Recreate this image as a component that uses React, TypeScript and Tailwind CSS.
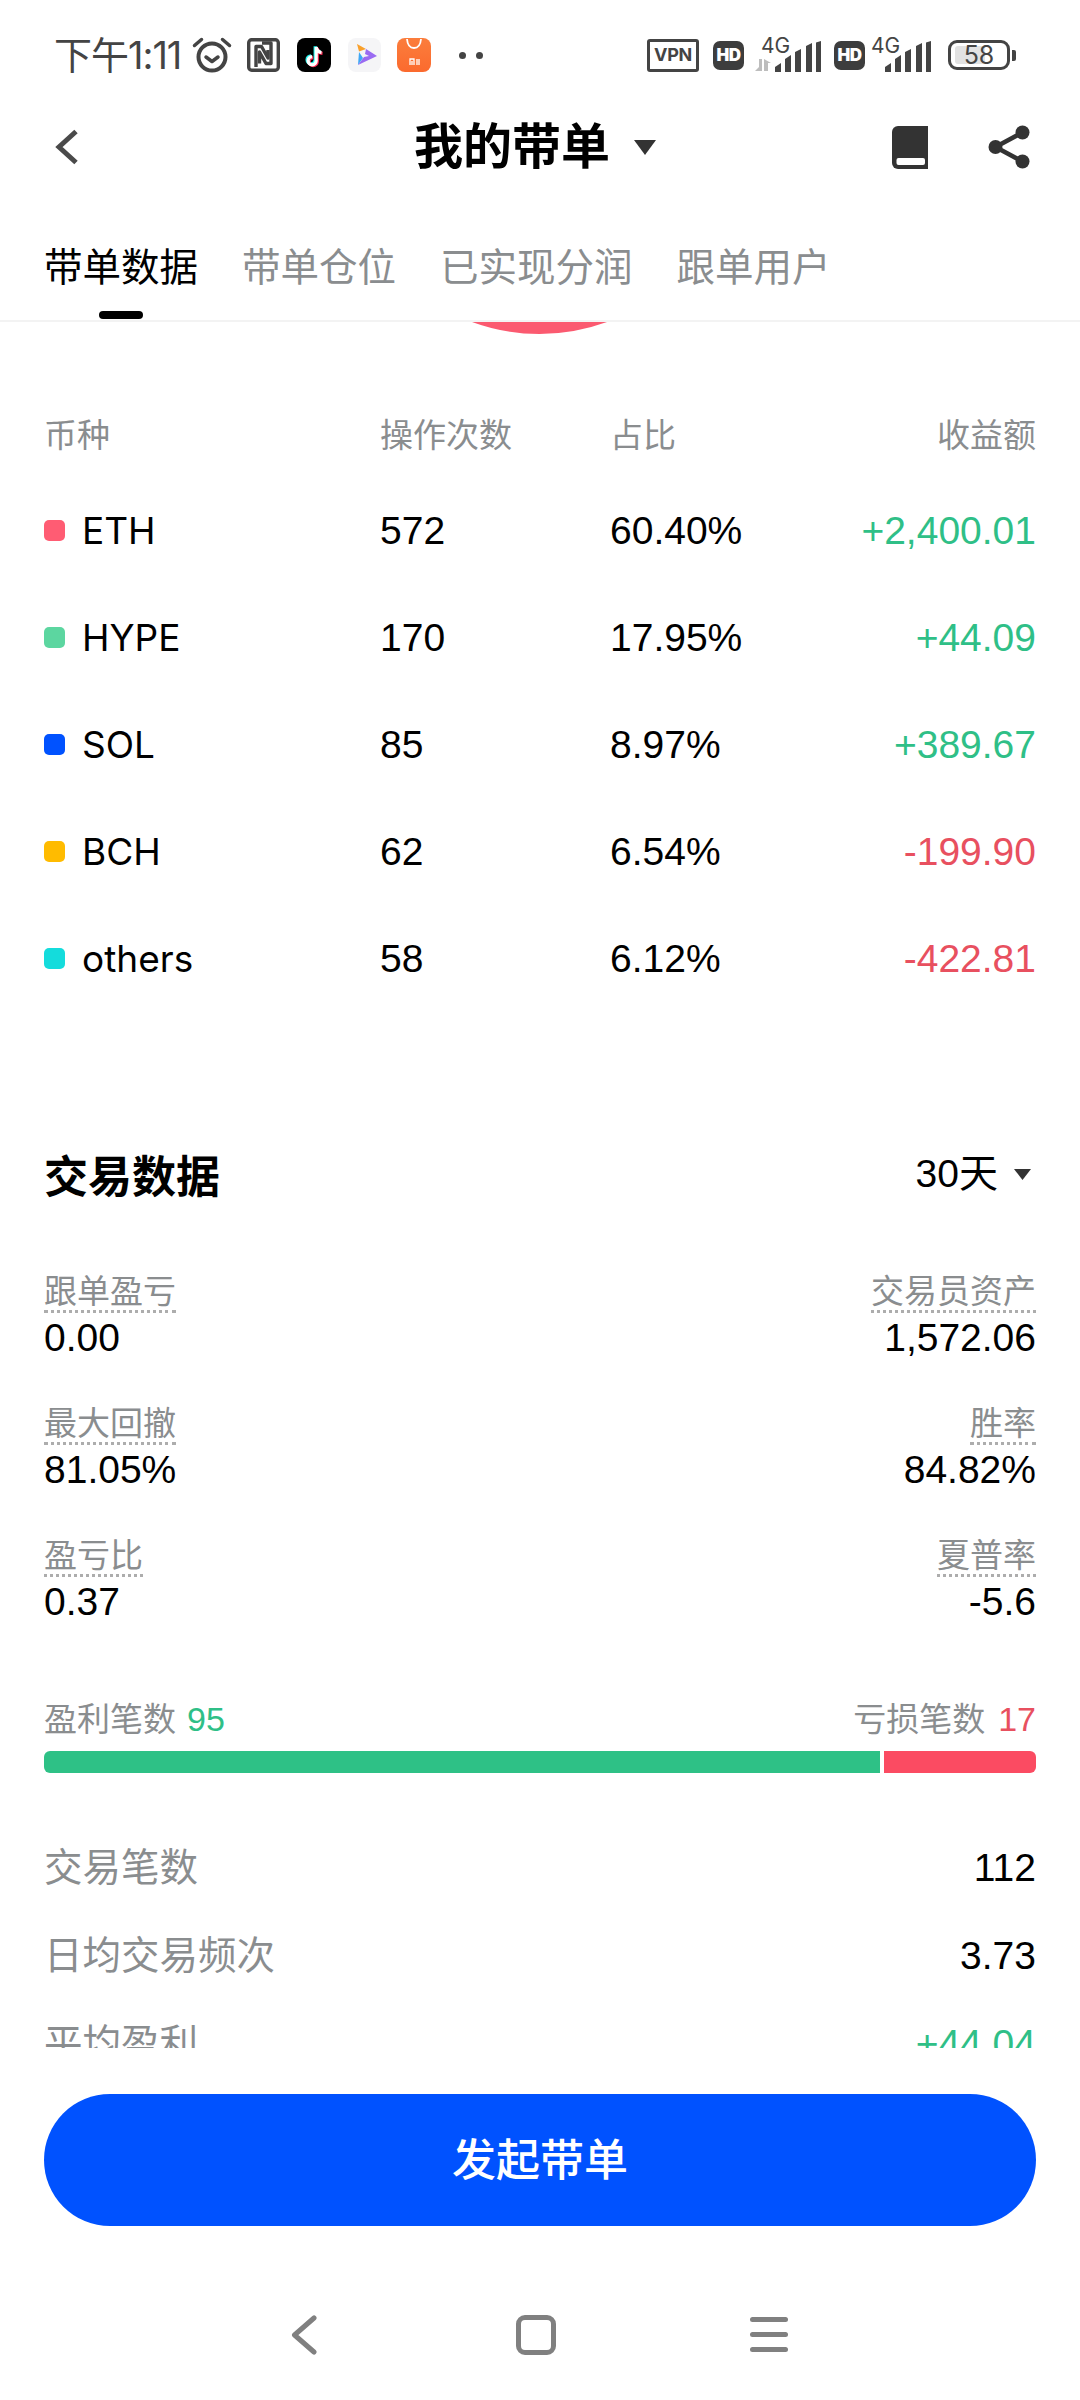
import React from "react";

const rows = [
  { c: "bg-[#ff5c73]", n: "ETH", o: "572", p: "60.40%", v: "+2,400.01", g: true },
  { c: "bg-[#5cd6a0]", n: "HYPE", o: "170", p: "17.95%", v: "+44.09", g: true },
  { c: "bg-[#0052ff]", n: "SOL", o: "85", p: "8.97%", v: "+389.67", g: true },
  { c: "bg-[#ffbb00]", n: "BCH", o: "62", p: "6.54%", v: "-199.90", g: false },
  { c: "bg-[#14dcdc]", n: "others", o: "58", p: "6.12%", v: "-422.81", g: false },
];

const stats = [
  ["跟单盈亏", "0.00", "交易员资产", "1,572.06"],
  ["最大回撤", "81.05%", "胜率", "84.82%"],
  ["盈亏比", "0.37", "夏普率", "-5.6"],
];

function Alarm() {
  return (
    <svg width="40" height="36" viewBox="0 0 40 36" fill="none" stroke="#444" strokeLinecap="round">
      <circle cx="20" cy="20" r="13.5" strokeWidth="4" />
      <path d="M14 20l6 4.5 6-4.5" strokeWidth="3.5" strokeLinejoin="round" />
      <path d="M2.5 8.5 9.5 2.5M37.5 8.5l-7-6" strokeWidth="3.5" />
    </svg>
  );
}

function Nfc() {
  return (
    <svg width="33" height="34" viewBox="0 0 33 34" fill="none" stroke="#444" strokeWidth="3.4" strokeLinejoin="round">
      <rect x="1.7" y="1.7" width="29.6" height="30.6" rx="3" />
      <path d="M9 29V8.5h5.5L21 20v-8" />
      <path d="M12.5 25.5V14l6.5 11.5h5V5h-9" />
    </svg>
  );
}

function TikTok() {
  const d = "M19.5 6v15.5a4.6 4.6 0 1 1-4.6-4.6M19.5 6c.5 3.6 2.8 5.8 6 6.2";
  return (
    <div className="w-[34px] h-[34px] rounded-[8px] bg-black flex items-center justify-center">
      <svg width="30" height="30" viewBox="0 0 34 30" fill="none" strokeWidth="3.6">
        <path d={d} stroke="#25f4ee" transform="translate(-1.2 -1)" />
        <path d={d} stroke="#fe2c55" transform="translate(1.2 1)" />
        <path d={d} stroke="#fff" />
      </svg>
    </div>
  );
}

function PlayApp() {
  return (
    <div className="w-[33px] h-[34px] rounded-[8px] bg-[#f5f5f7] flex items-center justify-center">
      <svg width="28" height="28" viewBox="0 0 28 28">
        <path d="M6 3 15 8l-7 2.5z" fill="#f9a02c" />
        <path d="M8 11 12 17 7 24z" fill="#3fa7f5" />
        <path d="M15 8 26 15 7 24l6-8 5-1-4-2z" fill="#9a6bf2" />
      </svg>
    </div>
  );
}

function MiStore() {
  return (
    <div className="w-[34px] h-[34px] rounded-[8px] bg-gradient-to-b from-[#fb7d3c] to-[#fb6a2e] flex flex-col items-center">
      <svg width="20" height="12" viewBox="0 0 20 12" fill="none" stroke="#fff" strokeWidth="1.8">
        <path d="M3 1c.5 6 3 9 7 9s6.500-3 7-9" />
      </svg>
      <svg className="mt-[8px]" width="11" height="7" viewBox="0 0 11 7" fill="none" stroke="#fff" strokeWidth="1.3">
        <path d="M1 7V1h4v6M3 3v4M8 1v6M10 1v6" />
      </svg>
    </div>
  );
}

function Bars() {
  return (
    <svg width="47" height="31" viewBox="0 0 47 31" fill="#444">
      <path d="M0 31v-5l6-4v9zM10 31V18l6-4v17zM20 31V11l6-3v23zM31 31V5l6-3v29zM41 31V1.500l5-1.500V31z" />
    </svg>
  );
}

function Signal({ arrows }: { arrows?: boolean }) {
  return (
    <div className="relative h-[34px] flex items-end">
      {arrows ? (
        <svg className="mr-[4px] mb-[1px]" width="16" height="12" viewBox="0 0 16 12" fill="#bdbdbd">
          <path d="M7 0v12L0 12l4-4V0zM9 12V0l7 4h-3v8z" />
        </svg>
      ) : (
        <div className="w-[14px]" />
      )}
      <span
        className={
          arrows
            ? "absolute left-[6px] top-[-4px] text-[21px] leading-[24px] text-[#444]"
            : "absolute left-0 top-[-4px] text-[21px] leading-[24px] text-[#444]"
        }
      >
        4G
      </span>
      <Bars />
    </div>
  );
}

function Hd() {
  return (
    <div className="w-[31px] h-[29px] rounded-[7px] bg-[#3d3d3d] flex items-center justify-center">
      <span className="text-white text-[17px] leading-none font-black tracking-[-0.5px]">HD</span>
    </div>
  );
}

export default function App() {
  return (
    <div className="w-[1080px] h-[2400px] bg-white flex flex-col overflow-hidden font-['Inter','Noto_Sans_CJK_SC',sans-serif] text-black">
      {/* status bar */}
      <div className="h-[110px] shrink-0 flex items-center pl-[54px] pr-[64px]">
        <span className="text-[38px] leading-[44px] text-[#444] tracking-[-1px] w-[138px] whitespace-nowrap">下午1:11</span>
        <Alarm />
        <div className="ml-[15px]"><Nfc /></div>
        <div className="ml-[17px]"><TikTok /></div>
        <div className="ml-[17px]"><PlayApp /></div>
        <div className="ml-[16px]"><MiStore /></div>
        <div className="ml-[28px] flex gap-[10px]">
          <div className="w-[7px] h-[7px] rounded-full bg-[#444]" />
          <div className="w-[7px] h-[7px] rounded-full bg-[#444]" />
        </div>
        <div className="ml-auto flex items-center">
          <div className="w-[52px] h-[33px] rounded-[3px] border-[3px] border-[#444] flex items-center justify-center">
            <span className="text-[18px] leading-none font-bold text-[#444] tracking-[-0.3px]">VPN</span>
          </div>
          <div className="ml-[14px]"><Hd /></div>
          <div className="ml-[11px]"><Signal arrows /></div>
          <div className="ml-[12px]"><Hd /></div>
          <div className="ml-[6px]"><Signal /></div>
          <div className="ml-[16px] w-[62px] h-[30px] rounded-[9px] border-[3px] border-[#444] flex items-center justify-center relative">
            <div className="absolute left-[4px] top-[3px] bottom-[3px] w-[30px] rounded-[3px] bg-[#e2e2e2]" />
            <span className="relative text-[25px] leading-none text-[#444]">58</span>
          </div>
          <div className="ml-[2px] w-[4px] h-[11px] rounded-r-[2px] bg-[#444]" />
        </div>
      </div>

      {/* header */}
      <div className="h-[74px] shrink-0 flex items-center pl-[55px] pr-[50px]">
        <svg width="24" height="36" viewBox="0 0 24 36" fill="none" stroke="#4a4a4a" strokeWidth="5">
          <path d="M21 2.500 4 18l17 15.500" />
        </svg>
        <span className="ml-[335px] text-[49px] leading-[60px] font-bold whitespace-nowrap">我的带单</span>
        <svg className="ml-[24px]" width="22" height="15" viewBox="0 0 22 15" fill="#333">
          <path d="M0 0h22L11 15z" />
        </svg>
        <svg className="ml-auto" width="36" height="43" viewBox="0 0 36 43">
          <path d="M6 0h30v43H6a6 6 0 0 1-6-6V6a6 6 0 0 1 6-6z" fill="#333" />
          <rect x="4.500" y="32" width="28.500" height="7" rx="2" fill="#fff" />
        </svg>
        <svg className="ml-[60px]" width="42" height="44" viewBox="0 0 42 44" fill="#333">
          <circle cx="34.500" cy="7.500" r="7" />
          <circle cx="7.500" cy="22" r="7" />
          <circle cx="34.500" cy="36.500" r="7" />
          <path d="M34.500 7.500 7.500 22l27 14.500" fill="none" stroke="#333" strokeWidth="4.500" />
        </svg>
      </div>

      {/* tabs */}
      <div className="h-[138px] shrink-0 border-b-2 border-[#f3f3f3] pl-[44px] pt-[60px]">
        <div className="flex gap-[44px] text-[38.5px] leading-[46px] whitespace-nowrap text-[#8a8d8f]">
          <span className="text-black">带单数据</span>
          <span>带单仓位</span>
          <span>已实现分润</span>
          <span>跟单用户</span>
        </div>
        <div className="ml-[55px] mt-[21px] w-[44px] h-[8px] rounded-[4px] bg-black" />
      </div>

      {/* scrolled content */}
      <div className="h-[1726px] shrink-0 overflow-hidden px-[44px]">
        <div className="flex justify-center h-[12px] pr-[1px]">
          <svg width="135" height="12" viewBox="0 0 135 12">
            <path d="M0 0A196 196 0 0 0 135 0z" fill="#fb5a70" />
          </svg>
        </div>

        {/* coin table */}
        <div className="mt-[76px] grid grid-cols-[336px_230px_1fr_auto] items-center h-[50px] text-[33px] leading-[50px] text-[#8a8d8f]">
          <div>币种</div>
          <div>操作次数</div>
          <div>占比</div>
          <div>收益额</div>
        </div>
        <div className="mt-[17px]">
          {rows.map((r) => (
            <div key={r.n} className="grid grid-cols-[336px_230px_1fr_auto] items-center h-[107px] text-[39px] font-['Liberation_Sans',sans-serif]">
              <div className="flex items-center gap-[17px]">
                <div className={`w-[21px] h-[21px] rounded-[5px] ${r.c}`} />
                <span className="text-[37px] font-['Inter',sans-serif]">{r.n}</span>
              </div>
              <div className="pt-[2px]">{r.o}</div>
              <div className="pt-[2px]">{r.p}</div>
              <div className={r.g ? "pt-[2px] text-[#2fbf87]" : "pt-[2px] text-[#e8505f]"}>{r.v}</div>
            </div>
          ))}
        </div>

        {/* trade data */}
        <div className="mt-[135px] h-[60px] flex items-center justify-between">
          <span className="text-[44px] leading-[60px] font-bold">交易数据</span>
          <div className="flex items-center">
            <span className="text-[39px] leading-[46px] -translate-y-[3px] font-['Liberation_Sans','Noto_Sans_CJK_SC',sans-serif]">30天</span>
            <svg className="ml-[16px] mr-[5px] -translate-y-[3px]" width="17" height="11" viewBox="0 0 17 11" fill="#333">
              <path d="M0 0h17L8.500 11z" />
            </svg>
          </div>
        </div>

        <div className="mt-[66px] flex flex-col gap-[44px]">
          {stats.map((s) => (
            <div key={s[0]} className="flex justify-between h-[88px]">
              <div className="flex flex-col items-start">
                <span className="text-[33px] leading-[37px] text-[#8a8d8f] border-b-[3px] border-dotted border-[#adadad]">{s[0]}</span>
                <span className="mt-[3px] text-[39px] leading-[44px] font-['Liberation_Sans',sans-serif]">{s[1]}</span>
              </div>
              <div className="flex flex-col items-end">
                <span className="text-[33px] leading-[37px] text-[#8a8d8f] border-b-[3px] border-dotted border-[#adadad]">{s[2]}</span>
                <span className="mt-[3px] text-[39px] leading-[44px] font-['Liberation_Sans',sans-serif]">{s[3]}</span>
              </div>
            </div>
          ))}
        </div>

        {/* win/loss */}
        <div className="mt-[72px] h-[44px] flex justify-between items-center text-[33px] leading-[44px] text-[#8a8d8f]">
          <div>
            盈利笔数<span className="ml-[11px] text-[34px] text-[#2fbf87] font-['Liberation_Sans',sans-serif]">95</span>
          </div>
          <div>
            亏损笔数<span className="ml-[13px] text-[34px] text-[#e8505f] font-['Liberation_Sans',sans-serif]">17</span>
          </div>
        </div>
        <div className="mt-[10px] h-[22px] flex gap-[4px]">
          <div className="w-[836px] rounded-l-[6px] bg-[#2ec186]" />
          <div className="flex-1 rounded-r-[6px] bg-[#fb4b62]" />
        </div>

        <div className="mt-[51px]">
          <div className="h-[88px] flex items-center justify-between">
            <span className="text-[38.5px] text-[#8a8d8f]">交易笔数</span>
            <span className="text-[39px] font-['Liberation_Sans',sans-serif]">112</span>
          </div>
          <div className="h-[88px] flex items-center justify-between">
            <span className="text-[38.5px] text-[#8a8d8f]">日均交易频次</span>
            <span className="text-[39px] font-['Liberation_Sans',sans-serif]">3.73</span>
          </div>
          <div className="h-[88px] flex items-center justify-between">
            <span className="text-[38.5px] text-[#8a8d8f]">平均盈利</span>
            <span className="text-[39px] text-[#2fbf87] font-['Liberation_Sans',sans-serif]">+44.04</span>
          </div>
        </div>
      </div>

      {/* button */}
      <div className="px-[44px] mt-[46px] shrink-0">
        <div className="h-[132px] rounded-full bg-[#0052ff] flex items-center justify-center">
          <span className="text-[44px] font-medium text-white">发起带单</span>
        </div>
      </div>

      {/* nav bar */}
      <div className="mt-[89px] ml-[291px] flex items-start shrink-0">
        <svg width="26" height="40" viewBox="0 0 26 40" fill="none" stroke="#808080" strokeWidth="5" strokeLinecap="round" strokeLinejoin="round">
          <path d="M23 3 3.500 20 23 37" />
        </svg>
        <div className="ml-[199px] w-[40px] h-[40px] rounded-[9px] border-[5px] border-[#808080]" />
        <div className="ml-[194px] w-[38px] mt-[2px] flex flex-col gap-[10px]">
          <div className="h-[5px] rounded-full bg-[#808080]" />
          <div className="h-[5px] rounded-full bg-[#808080]" />
          <div className="h-[5px] rounded-full bg-[#808080]" />
        </div>
      </div>
    </div>
  );
}
